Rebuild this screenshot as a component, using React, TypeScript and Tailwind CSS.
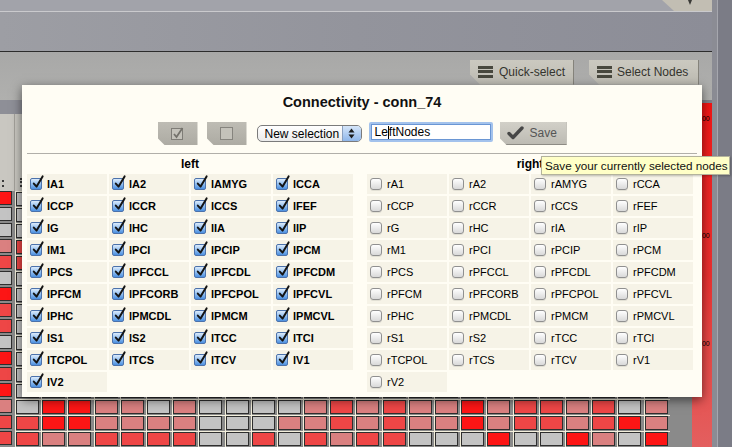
import React from "react"

const NODES = [
  "A1", "A2", "AMYG", "CCA", "CCP", "CCR", "CCS", "FEF", "G", "HC", "IA", "IP", "M1", "PCI", "PCIP", "PCM",
  "PCS", "PFCCL", "PFCDL", "PFCDM", "PFCM", "PFCORB", "PFCPOL", "PFCVL", "PHC", "PMCDL", "PMCM", "PMCVL",
  "S1", "S2", "TCC", "TCI", "TCPOL", "TCS", "TCV", "V1", "V2",
]

const CELL: Record<string, string> = {
  R: "bg-[#fd1515]",
  M: "bg-[#ee4646]",
  P: "bg-[#da8080]",
  G: "bg-[#c3c3c3]",
}

// first two columns of rows 0-12, rest is hidden under the dialog
const COL0 = "RGGPMGRMMGRMR"
const COL1 = "GGGMMGGGGGGGG"
const POOL = "RMPGPMGPRGMPGMPRPGMG"
const BOTTOM = [
  "PGRRPPGPGGGGPMPMPPRPMMPMGP",
  "MMRRPPPPGGGPPMPMPPRPMMPMRP",
  "MMPPMMMMGGMGMPMMGGGRGGRPGR",
]

function matrixRow(r: number) {
  if (r >= 13) return BOTTOM[r - 13].split("")
  const out = [COL0[r], COL1[r]]
  for (let k = 1; k < 25; k++) out.push(POOL[(r * 7 + k * 3) % POOL.length])
  return out
}

function Bars() {
  return (
    <span className="flex w-[15px] flex-none flex-col gap-[1.5px]">
      <span className="h-[3px] bg-[#48483e]" />
      <span className="h-[3px] bg-[#48483e]" />
      <span className="h-[3px] bg-[#48483e]" />
    </span>
  )
}

function Box({ checked }: { checked: boolean }) {
  if (!checked)
    return (
      <span className="h-[12px] w-[12px] flex-none rounded-[3px] border border-[#909090] bg-linear-to-b from-white to-[#d9d9d9] shadow-[0_1px_0_rgba(0,0,0,0.08)]" />
    )
  return (
    <span className="relative h-[12px] w-[12px] flex-none rounded-[2px] border border-[#4c72ab] bg-linear-to-b from-[#dcebfb] via-[#93c0f1] to-[#4b8fe0]">
      <svg className="absolute left-[1px] top-[-4px]" width="12" height="14" viewBox="0 0 12 14">
        <path d="M1.8 8.6 L4.6 11.6 L10.6 1.4" stroke="#141414" strokeWidth="2" fill="none" strokeLinecap="round" strokeLinejoin="round" />
      </svg>
    </span>
  )
}

function NodeGroup({ prefix, checked }: { prefix: string; checked: boolean }) {
  return (
    <div className="grid w-[326px] grid-cols-4 gap-[2px]">
      {NODES.map((n) => (
        <div key={n} className="flex h-[20px] items-center gap-[5px] bg-[#f6f3e7] pl-[3px]">
          <Box checked={checked} />
          <span className={checked ? "text-[11px] font-bold leading-none" : "text-[11px] leading-none"}>
            {prefix}
            {n}
          </span>
        </div>
      ))}
    </div>
  )
}

export default function App() {
  const rows = Array.from({ length: 16 }, (_, r) => matrixRow(r))
  const cols = Array.from({ length: 25 }, (_, k) => k)

  return (
    <div className="relative h-[447px] w-[732px] overflow-hidden bg-[#a9a9a8] font-['Liberation_Sans',Arial,sans-serif] text-black">
      <div className="flex h-full">
        <div className="flex w-[712px] flex-none flex-col">
          {/* window title strip */}
          <div className="flex h-[11px] justify-end bg-[#a2a3aa] pr-[0px]">
            <div className="relative h-[11px] w-[50px] bg-[#c2beb3] [clip-path:polygon(0_0,100%_0,100%_100%,12px_100%)]">
              <svg className="absolute left-[24px] top-0" width="8" height="5" viewBox="0 0 8 5">
                <path d="M4 5 L2 0 L6 0 Z" fill="#3a3a36" />
              </svg>
            </div>
          </div>
          <div className="h-px bg-[#cacacd]" />
          <div className="h-[40px] bg-linear-to-r from-[#9d9ea4] via-[#93949c] to-[#8c8d97]" />
          <div className="h-px bg-[#2c2c2c]" />

          {/* toolbar */}
          <div className="flex h-[50px] items-start justify-end gap-[15px] bg-linear-to-b from-[#a8a8a7] to-[#b0b0ae] pr-[13px] pt-[8px]">
            <div className="flex h-[25px] w-[104px] items-start gap-[6px] border-r border-[#85837b] bg-linear-to-b from-[#cbc9c0] to-[#bdbbb2] pl-[8px] pt-[6px] [clip-path:polygon(0_0,100%_0,100%_100%,10px_100%,0_calc(100%-10px))]">
              <Bars />
              <span className="text-[12px] leading-[12px] text-[#34342e]">Quick-select</span>
            </div>
            <div className="flex h-[25px] w-[110px] items-start gap-[5px] border-r border-[#85837b] bg-linear-to-b from-[#cbc9c0] to-[#bdbbb2] pl-[8px] pt-[6px] [clip-path:polygon(0_0,100%_0,100%_100%,10px_100%,0_calc(100%-10px))]">
              <Bars />
              <span className="text-[12px] leading-[12px] text-[#34342e]">Select Nodes</span>
            </div>
          </div>

          <div className="flex flex-1">
            <div className="flex w-[692px] flex-none flex-col">
              <div className="h-[14px] bg-[#8e8f97]" />
              {/* column headers */}
              <div className="flex h-[77px] bg-[#c9c7c1]">
                <div className="flex w-[15px] flex-none items-end border-r border-[#a3a19b] pb-[4px] pl-[2px]">
                  <span className="h-[7px] border-l-2 border-dotted border-[#3a3a3a]" />
                </div>
                {cols.map((k) => (
                  <div key={k} className="flex w-[26.2px] flex-none items-end border-r border-[#a3a19b] pb-[4px] pl-[5px]">
                    <span className="h-[9px] border-l-2 border-dotted border-[#3a3a3a]" />
                  </div>
                ))}
              </div>
              {/* matrix */}
              <div className="flex flex-col bg-[#8a8a8a]">
                {rows.map((row, r) => (
                  <div key={r} className="flex h-[16px]">
                    <div className="h-[16px] w-[15px] flex-none">
                      <div className={`h-[14px] w-[12px] border-b border-r border-t border-[#2e2e2e] ${CELL[row[0]]}`} />
                    </div>
                    {cols.map((k) => (
                      <div key={k} className="h-[16px] w-[26.2px] flex-none border-l border-t border-[#f3efdc]">
                        <div className={`h-[14px] w-[23px] border border-[#2e2e2e] ${CELL[row[k + 1]]}`} />
                      </div>
                    ))}
                  </div>
                ))}
              </div>
              <div className="flex-1 bg-[#7f808a]" />
            </div>
            <div className="w-[22px] flex-none bg-[#7f808a]" />
          </div>
        </div>

        {/* right-hand scale + frame */}
        <div className="flex w-[20px] flex-none">
          <div className="w-[5px] bg-[#8b8c94]" />
          <div className="w-px bg-[#a6a7ae]" />
          <div className="flex-1 bg-[#7b7c86]" />
        </div>
      </div>

      {/* red colour scale */}
      <div className="absolute left-[692px] top-[103px] h-[344px] w-[20px] bg-linear-to-b from-[#f21414] via-[#ea3030] to-[#e35f5f] text-[7px] leading-none">
        <span className="absolute left-[6px] top-[12px]">100</span>
        <span className="absolute left-[6px] top-[129px]">200</span>
        <span className="absolute left-[6px] top-[237px]">300</span>
      </div>

      {/* dialog */}
      <div className="absolute left-[22px] top-[85px] h-[312px] w-[680px] bg-[#fffdf4] shadow-[0_3px_10px_rgba(0,0,0,0.55)]">
        <div className="pt-[9px] text-center text-[14.5px] font-bold leading-[17px] text-[#111]">Connectivity - conn_74</div>

        <div className="mt-[11px] flex h-[23px] items-start justify-center">
          <div className="flex h-[23px] w-[40px] items-center justify-center bg-linear-to-b from-[#bebcb4] to-[#adaba3] [clip-path:polygon(0_0,100%_0,100%_100%,7px_100%,0_calc(100%-7px))]">
            <svg width="15" height="15" viewBox="0 0 15 15">
              <rect x="1.5" y="2.5" width="11" height="11" fill="#c4c2ba" stroke="#7f7d77" />
              <path d="M4 8 L6.5 11 L12.5 2" stroke="#74726c" strokeWidth="1.8" fill="none" />
            </svg>
          </div>
          <div className="ml-[9px] flex h-[23px] w-[40px] items-center justify-center bg-linear-to-b from-[#bebcb4] to-[#adaba3] [clip-path:polygon(0_0,100%_0,100%_100%,7px_100%,0_calc(100%-7px))]">
            <svg width="15" height="15" viewBox="0 0 15 15">
              <rect x="1.5" y="1.5" width="12" height="12" fill="#c4c2ba" stroke="#86847e" />
            </svg>
          </div>
          <div className="ml-[10px] mt-[3px] flex h-[17px] w-[105px] items-center overflow-hidden rounded-[5px] border border-[#7b7b7b] bg-linear-to-b from-white to-[#ebebeb]">
            <span className="flex-1 pl-[7px] text-[12px] leading-none">New selection</span>
            <span className="flex h-full w-[19px] flex-none items-center justify-center border-l border-[#8aa0c0] bg-linear-to-b from-[#d6e6f9] to-[#8fb6e9]">
              <svg width="7" height="11" viewBox="0 0 7 11">
                <path d="M3.5 0.5 L6.5 4.5 L0.5 4.5 Z" fill="#1b1b1b" />
                <path d="M0.5 6.5 L6.5 6.5 L3.5 10.5 Z" fill="#1b1b1b" />
              </svg>
            </span>
          </div>
          <div className="ml-[7px] h-[20px] w-[124px] rounded-[2px] border-2 border-[#a3c2ec]">
            <div className="flex h-full items-center border border-[#6a96d4] bg-white pl-[3px] text-[12px] leading-none">
              <span>Le</span>
              <span className="h-[13px] w-px bg-black" />
              <span>ftNodes</span>
            </div>
          </div>
          <div className="ml-[7px] flex h-[23px] w-[67px] items-center gap-[6px] border-r border-b border-[#8d8b84] bg-linear-to-b from-[#d2d0c8] to-[#bdbbb3] pl-[7px] [clip-path:polygon(0_0,100%_0,100%_100%,7px_100%,0_calc(100%-7px))]">
            <svg width="17" height="14" viewBox="0 0 17 14">
              <path d="M2 7.5 L6 11.5 L15 2" stroke="#474747" strokeWidth="3.4" fill="none" strokeLinecap="round" strokeLinejoin="round" />
            </svg>
            <span className="text-[12px] leading-none text-[#555]">Save</span>
          </div>
        </div>

        <div className="mx-[5px] mt-[8px] h-px bg-[#b1afa9]" />

        <div className="flex gap-[14px] pl-[5px]">
          <div className="h-[20px] w-[326px] text-center text-[12px] font-bold leading-[20px]">left</div>
          <div className="h-[20px] w-[326px] text-center text-[12px] font-bold leading-[20px]">right</div>
        </div>

        <div className="flex gap-[14px] pl-[5px]">
          <NodeGroup prefix="l" checked />
          <NodeGroup prefix="r" checked={false} />
        </div>
      </div>

      {/* tooltip */}
      <div className="absolute left-[541px] top-[156px] h-[19px] w-[189px] border border-[#b3b39c] bg-[#ffffc7] pl-[3px] text-[11.7px] leading-[17px] text-[#111] shadow-[1px_1px_2px_rgba(0,0,0,0.25)]">
        Save your currently selected nodes
      </div>
    </div>
  )
}
